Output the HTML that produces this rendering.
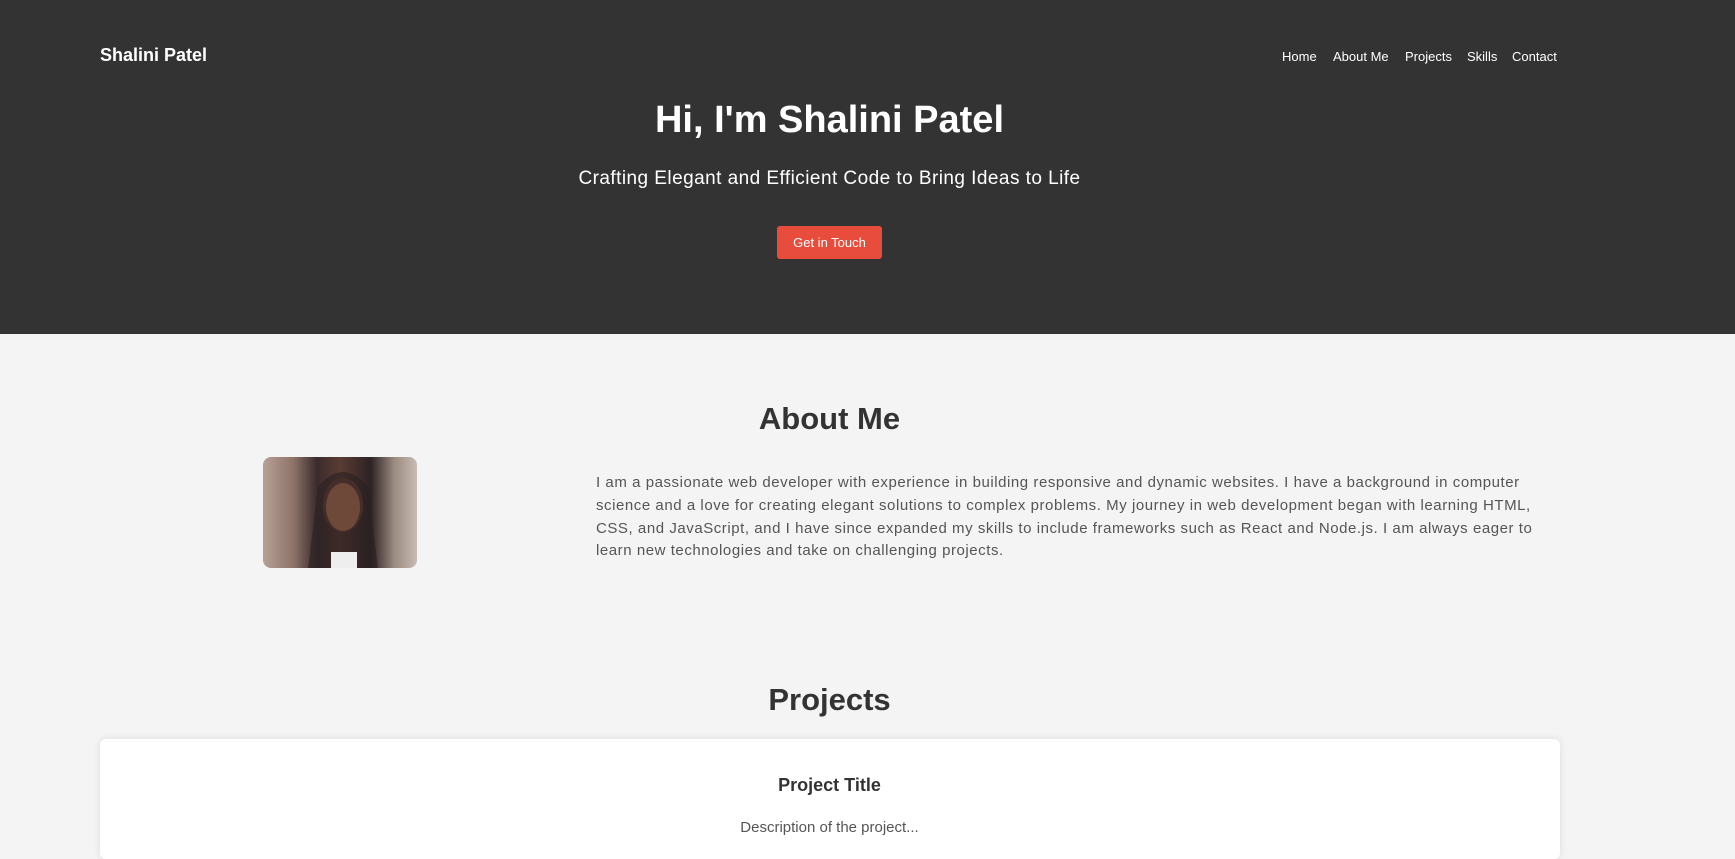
<!DOCTYPE html>
<html><head><meta charset="utf-8"><style>
*{margin:0;padding:0;box-sizing:border-box}
body{width:1735px;height:837px;overflow:hidden;background:#f4f4f4;font-family:"Liberation Sans",sans-serif;position:relative}
.hero{position:absolute;left:0;top:0;width:1735px;height:334px;background:#333}
.abs{position:absolute;white-space:nowrap}
.logo{left:100px;top:45px;font-size:18px;font-weight:bold;color:#fff}
.nav{top:49px;font-size:13px;color:#fff}
.c{left:100px;width:1459px;text-align:center}
h1{font-size:38px;font-weight:bold;color:#fff}
.btn{left:777px;top:226px;width:105px;height:33px;background:#e74c3c;border-radius:3px;color:#fff;font-size:13px;text-align:center;line-height:33px}
h2{font-size:31px;font-weight:bold;color:#333}
.img{left:263px;top:457px;width:154px;height:111px;border-radius:8px;overflow:hidden;background:linear-gradient(90deg,#b7a196 0%,#8d7268 20%,#3a2b2c 35%,#5a3c33 50%,#2d2224 70%,#9a8a80 85%,#c9bcb3 100%)}
.p{left:596px;top:472px;font-size:15px;line-height:22.8px;color:#555;letter-spacing:0.55px}
.card{left:100px;top:739px;width:1460px;height:120px;background:#fff;border-radius:6px;box-shadow:0 0 8px rgba(0,0,0,0.1)}
</style></head><body>
<div class="hero"></div>
<div class="abs logo">Shalini Patel</div>
<div class="abs nav" style="left:1282px">Home</div>
<div class="abs nav" style="left:1333px">About Me</div>
<div class="abs nav" style="left:1405px">Projects</div>
<div class="abs nav" style="left:1467px">Skills</div>
<div class="abs nav" style="left:1512px">Contact</div>
<h1 class="abs c" style="top:99px">Hi, I'm Shalini Patel</h1>
<div class="abs c" style="top:168px;font-size:19px;color:#fff;letter-spacing:0.45px">Crafting Elegant and Efficient Code to Bring Ideas to Life</div>
<div class="abs btn">Get in Touch</div>
<h2 class="abs c" style="top:401px">About Me</h2>
<div class="abs img">
<svg width="154" height="111"><ellipse cx="80" cy="48" rx="20" ry="27" fill="#6b4535"/><path d="M55 30 Q80 0 105 30 L115 111 L45 111 Z" fill="#2a1f22" opacity="0.6"/><ellipse cx="80" cy="50" rx="17" ry="24" fill="#6e4838"/><rect x="68" y="95" width="26" height="16" fill="#eee"/></svg>
</div>
<div class="abs p">I am a passionate web developer with experience in building responsive and dynamic websites. I have a background in computer<br>science and a love for creating elegant solutions to complex problems. My journey in web development began with learning HTML,<br>CSS, and JavaScript, and I have since expanded my skills to include frameworks such as React and Node.js. I am always eager to<br>learn new technologies and take on challenging projects.</div>
<h2 class="abs c" style="top:682px">Projects</h2>
<div class="abs card"></div>
<div class="abs c" style="top:775px;font-size:18px;font-weight:bold;color:#333">Project Title</div>
<div class="abs c" style="top:819px;font-size:15px;color:#555">Description of the project...</div>
</body></html>
